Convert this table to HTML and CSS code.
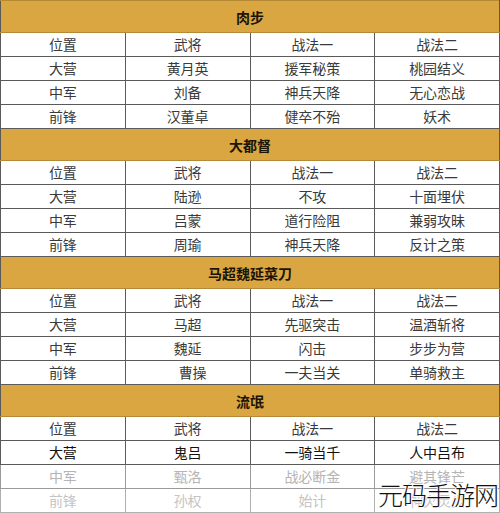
FILE: index.html
```html
<!DOCTYPE html>
<html lang="zh">
<head>
<meta charset="utf-8">
<link rel="stylesheet" href="styles.css">
</head>
<body>
<div class="page">
<table class="lineup">
  <tbody>
    <tr class="head"><th colspan="4">肉步</th></tr>
    <tr><td>位置</td><td>武将</td><td>战法一</td><td>战法二</td></tr>
    <tr><td>大营</td><td>黄月英</td><td>援军秘策</td><td>桃园结义</td></tr>
    <tr><td>中军</td><td>刘备</td><td>神兵天降</td><td>无心恋战</td></tr>
    <tr><td>前锋</td><td>汉董卓</td><td>健卒不殆</td><td>妖术</td></tr>

    <tr class="head"><th colspan="4">大都督</th></tr>
    <tr><td>位置</td><td>武将</td><td>战法一</td><td>战法二</td></tr>
    <tr><td>大营</td><td>陆逊</td><td>不攻</td><td>十面埋伏</td></tr>
    <tr><td>中军</td><td>吕蒙</td><td>道行险阻</td><td>兼弱攻昧</td></tr>
    <tr><td>前锋</td><td>周瑜</td><td>神兵天降</td><td>反计之策</td></tr>

    <tr class="head"><th colspan="4">马超魏延菜刀</th></tr>
    <tr><td>位置</td><td>武将</td><td>战法一</td><td>战法二</td></tr>
    <tr><td>大营</td><td>马超</td><td>先驱突击</td><td>温酒斩将</td></tr>
    <tr><td>中军</td><td>魏延</td><td>闪击</td><td>步步为营</td></tr>
    <tr><td>前锋</td><td class="nudge">曹操</td><td>一夫当关</td><td>单骑救主</td></tr>

    <tr class="head"><th colspan="4">流氓</th></tr>
    <tr><td>位置</td><td>武将</td><td>战法一</td><td>战法二</td></tr>
    <tr class="strong"><td>大营</td><td>鬼吕</td><td>一骑当千</td><td>人中吕布</td></tr>
    <tr class="fade1"><td>中军</td><td>甄洛</td><td>战必断金</td><td>避其锋芒</td></tr>
    <tr class="fade2"><td>前锋</td><td>孙权</td><td>始计</td><td>神火灵炎</td></tr>
  </tbody>
</table>
<div class="watermark">元码手游网</div>
</div>
</body>
</html>
```

FILE: styles.css
```css
html, body {
  margin: 0;
  padding: 0;
  background: #ffffff;
}

.page {
  position: relative;
  width: 500px;
  height: 513px;
  overflow: hidden;
}

.lineup {
  width: 500px;
  border-collapse: collapse;
  table-layout: fixed;
  font-family: "Noto Sans CJK SC", "Noto Sans", sans-serif;
  font-size: 14px;
  color: #3a3a3a;
}

.lineup td {
  width: 125px;
  height: 23px;
  padding: 0;
  text-align: center;
  vertical-align: middle;
  border: 1px solid #5a5a5a;
  line-height: 23px;
}

.lineup .head th {
  height: 31px;
  padding: 0;
  background: #d9a641;
  color: #1c1407;
  font-weight: 700;
  font-size: 14px;
  text-align: center;
  border: 1px solid #b58a34;
  border-left-color: #5a5a5a;
  border-right-color: #5a5a5a;
}

.lineup .nudge {
  padding-left: 10px;
}

.lineup .strong td {
  color: #111111;
}

.lineup .fade1 td {
  color: #b4b4b4;
  border-color: #9a9a9a;
}

.lineup .fade2 td {
  color: #c4c4c4;
  border-color: #b0b0b0;
}

.watermark {
  position: absolute;
  right: 2px;
  bottom: 5px;
  font-family: "Noto Sans CJK SC", sans-serif;
  font-size: 25px;
  line-height: 28px;
  color: #111111;
  font-weight: 300;
  letter-spacing: -1px;
  text-shadow: 1px 0 0 #fff, -1px 0 0 #fff, 0 1px 0 #fff, 0 -1px 0 #fff;
}
```
